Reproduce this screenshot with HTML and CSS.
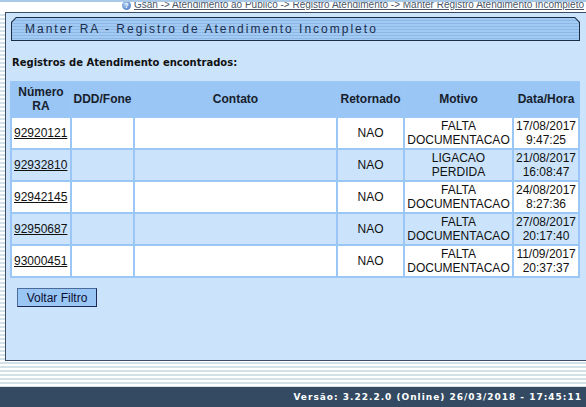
FILE: index.html
```html
<!DOCTYPE html>
<html>
<head>
<meta charset="utf-8">
<link rel="stylesheet" href="styles.css">
</head>
<body>
<div class="page">
  <div class="topbar">
    <div class="crumbs">
      <span class="help">?</span>
      <span class="crumb-text">Gsan -&gt; Atendimento ao Publico -&gt; Registro Atendimento -&gt; Manter Registro Atendimento Incompleto</span>
    </div>
  </div>
  <div class="panel">
    <div class="banner-outer">
      <div class="banner-inner">Manter RA - Registro de Atendimento Incompleto</div>
    </div>
    <div class="subtitle">Registros de Atendimento encontrados:</div>
    <table class="grid">
      <colgroup>
        <col class="c1"><col class="c2"><col class="c3"><col class="c4"><col class="c5"><col class="c6">
      </colgroup>
      <thead>
        <tr><th>Número<br>RA</th><th>DDD/Fone</th><th>Contato</th><th>Retornado</th><th>Motivo</th><th>Data/Hora</th></tr>
      </thead>
      <tbody>
        <tr class="odd"><td class="ra"><a href="#">92920121</a></td><td></td><td></td><td class="ctr">NAO</td><td class="ctr">FALTA<br>DOCUMENTACAO</td><td class="ctr">17/08/2017<br>9:47:25</td></tr>
        <tr class="even"><td class="ra"><a href="#">92932810</a></td><td></td><td></td><td class="ctr">NAO</td><td class="ctr">LIGACAO<br>PERDIDA</td><td class="ctr">21/08/2017<br>16:08:47</td></tr>
        <tr class="odd"><td class="ra"><a href="#">92942145</a></td><td></td><td></td><td class="ctr">NAO</td><td class="ctr">FALTA<br>DOCUMENTACAO</td><td class="ctr">24/08/2017<br>8:27:36</td></tr>
        <tr class="even"><td class="ra"><a href="#">92950687</a></td><td></td><td></td><td class="ctr">NAO</td><td class="ctr">FALTA<br>DOCUMENTACAO</td><td class="ctr">27/08/2017<br>20:17:40</td></tr>
        <tr class="odd"><td class="ra"><a href="#">93000451</a></td><td></td><td></td><td class="ctr">NAO</td><td class="ctr">FALTA<br>DOCUMENTACAO</td><td class="ctr">11/09/2017<br>20:37:37</td></tr>
      </tbody>
    </table>
    <div class="actions"><button class="btn">Voltar Filtro</button></div>
  </div>
  <div class="gap"></div>
  <div class="footer">Versão: 3.22.2.0 (Online) 26/03/2018 - 17:45:11</div>
</div>
</body>
</html>
```
FILE: styles.css
```css
html, body {
  margin: 0;
  padding: 0;
  width: 586px;
  height: 407px;
  overflow: hidden;
}
body {
  background: repeating-linear-gradient(to bottom, #ffffff 0px, #ffffff 2px, #d3e1e8 2px, #d3e1e8 4px);
  font-family: "Liberation Sans", Arial, sans-serif;
}
.page {
  display: flex;
  flex-direction: column;
  height: 407px;
}
.topbar {
  height: 12px;
  background: #ffffff;
  border-top: 2px solid #a9c9e6;
  box-sizing: border-box;
  overflow: hidden;
}
.crumbs {
  display: flex;
  align-items: center;
  gap: 3px;
  padding-left: 122px;
  height: 10px;
  white-space: nowrap;
  font-size: 10px;
  color: #4a5566;
  line-height: 10px;
  margin-top: -2px;
}
.help {
  display: inline-block;
  width: 9px;
  height: 9px;
  border-radius: 50%;
  background: radial-gradient(circle at 35% 35%, #a9c8f2, #3b6fc0);
  color: #fff;
  font-size: 7px;
  line-height: 9px;
  text-align: center;
  font-weight: bold;
  flex: none;
}
.crumb-text {
  text-decoration: underline;
}
.panel {
  margin-left: 5px;
  margin-right: -20px;
  height: 350px;
  box-sizing: border-box;
  background: #cbe4fc;
  border-top: 1px solid #3a4c66;
  border-left: 1px solid #3a4c66;
  border-bottom: 1px solid #3a4c66;
  padding: 4px 0 0 4px;
}
.banner-outer {
  margin-left: 1px;
  width: 569px;
  height: 24px;
  background: #1b2d47;
  clip-path: polygon(5px 0, 564px 0, 569px 5px, 569px 24px, 0 24px, 0 5px);
  padding: 1px;
  box-sizing: border-box;
}
.banner-inner {
  height: 22px;
  background: repeating-linear-gradient(to bottom, #a2caf2 0px, #a2caf2 2px, #8db8e6 2px, #8db8e6 3px);
  clip-path: polygon(4.5px 0, 562.5px 0, 567px 4.5px, 567px 22px, 0 22px, 0 4.5px);
  font-size: 12px;
  letter-spacing: 2px;
  color: #1a2e4e;
  line-height: 22px;
  padding-left: 13px;
  white-space: nowrap;
}
.subtitle {
  font-family: "DejaVu Sans", Verdana, sans-serif;
  font-weight: bold;
  font-size: 10px;
  color: #111;
  margin: 16px 0 0 2px;
  height: 12px;
  line-height: 12px;
}
.grid {
  margin-top: 12px;
  width: 570px;
  table-layout: fixed;
  border-collapse: separate;
  border-spacing: 2px;
  background: #9ac7f6;
  font-size: 12px;
}
.c1 { width: 58px; }
.c2 { width: 61px; }
.c3 { width: 201px; }
.c4 { width: 65px; }
.c5 { width: 107px; }
.c6 { width: 64px; }
.grid th {
  background: #99c6f5;
  color: #17202c;
  font-weight: bold;
  height: 33px;
  padding: 0;
  line-height: 14px;
  text-align: center;
}
.grid td {
  height: 30px;
  padding: 0;
  line-height: 14px;
  color: #111;
  vertical-align: middle;
}
.grid tr.odd td { background: #ffffff; }
.grid tr.even td { background: #cbe4fc; }
.grid td.ra { padding-left: 2px; }
.grid td.ra a { color: #111; }
.grid td.ctr { text-align: center; }
.actions {
  margin-top: 10px;
  padding-left: 7px;
}
.btn {
  font-family: "Liberation Sans", Arial, sans-serif;
  font-size: 12px;
  color: #0d0d30;
  background: #99c6f5;
  border: 1px solid #1d2a55;
  border-top-color: #4a6a9a;
  border-left-color: #4a6a9a;
  height: 19px;
  width: 80px;
  padding: 0;
  line-height: 16px;
}
.gap {
  height: 26px;
}
.footer {
  flex: 1;
  background: #334a62;
  color: #ffffff;
  font-family: "DejaVu Sans", Verdana, sans-serif;
  font-weight: bold;
  font-size: 9px;
  letter-spacing: 1px;
  text-align: right;
  padding-right: 4px;
  line-height: 20px;
}
```
